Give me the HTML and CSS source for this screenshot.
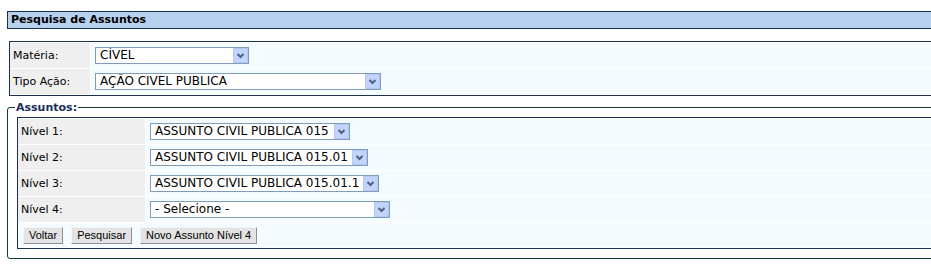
FILE: index.html
```html
<!DOCTYPE html>
<html lang="pt-BR">
<head>
    <meta charset="UTF-8">
    <title>Pesquisa de Assuntos</title>
    <link rel="stylesheet" href="styles.css">
</head>
<body>
    <div class="page">
        <div class="titulo">Pesquisa de Assuntos</div>

        <!-- Filtro principal -->
        <div class="tabela tabela-filtro">
            <div class="linha">
                <div class="rotulo">Matéria:</div>
                <div class="campo">
                    <span class="combo" style="width: 154px">
                        <select><option>CÍVEL</option></select>
                        <span class="seta"><svg width="13" height="13" viewBox="0 0 13 13"><polyline points="3.5,5 6.5,8 9.5,5" fill="none" stroke="#4d6185" stroke-width="2"/></svg></span>
                    </span>
                </div>
            </div>
            <div class="linha">
                <div class="rotulo">Tipo Ação:</div>
                <div class="campo">
                    <span class="combo" style="width: 286px">
                        <select><option>AÇÃO CIVEL PUBLICA</option></select>
                        <span class="seta"><svg width="13" height="13" viewBox="0 0 13 13"><polyline points="3.5,5 6.5,8 9.5,5" fill="none" stroke="#4d6185" stroke-width="2"/></svg></span>
                    </span>
                </div>
            </div>
        </div>

        <!-- Assuntos -->
        <fieldset class="assuntos">
            <legend>Assuntos:</legend>
            <div class="tabela tabela-niveis">
                <div class="linha">
                    <div class="rotulo">Nível 1:</div>
                    <div class="campo">
                        <span class="combo" style="width: 200px">
                            <select><option>ASSUNTO CIVIL PUBLICA 015</option></select>
                            <span class="seta"><svg width="13" height="13" viewBox="0 0 13 13"><polyline points="3.5,5 6.5,8 9.5,5" fill="none" stroke="#4d6185" stroke-width="2"/></svg></span>
                        </span>
                    </div>
                </div>
                <div class="linha">
                    <div class="rotulo">Nível 2:</div>
                    <div class="campo">
                        <span class="combo" style="width: 218px">
                            <select><option>ASSUNTO CIVIL PUBLICA 015.01</option></select>
                            <span class="seta"><svg width="13" height="13" viewBox="0 0 13 13"><polyline points="3.5,5 6.5,8 9.5,5" fill="none" stroke="#4d6185" stroke-width="2"/></svg></span>
                        </span>
                    </div>
                </div>
                <div class="linha">
                    <div class="rotulo">Nível 3:</div>
                    <div class="campo">
                        <span class="combo" style="width: 229px">
                            <select><option>ASSUNTO CIVIL PUBLICA 015.01.1</option></select>
                            <span class="seta"><svg width="13" height="13" viewBox="0 0 13 13"><polyline points="3.5,5 6.5,8 9.5,5" fill="none" stroke="#4d6185" stroke-width="2"/></svg></span>
                        </span>
                    </div>
                </div>
                <div class="linha">
                    <div class="rotulo">Nível 4:</div>
                    <div class="campo">
                        <span class="combo" style="width: 240px">
                            <select><option>- Selecione -</option></select>
                            <span class="seta"><svg width="13" height="13" viewBox="0 0 13 13"><polyline points="3.5,5 6.5,8 9.5,5" fill="none" stroke="#4d6185" stroke-width="2"/></svg></span>
                        </span>
                    </div>
                </div>
                <div class="linha-botoes">
                    <button class="botao">Voltar</button>
                    <button class="botao">Pesquisar</button>
                    <button class="botao">Novo Assunto Nível 4</button>
                </div>
            </div>
        </fieldset>
    </div>
</body>
</html>
```

FILE: styles.css
```css
/* Geral */
body {
    margin: 0;
    padding: 11px 0 0 7px;
    font-family: "DejaVu Sans", Verdana, sans-serif;
    font-size: 11px;
    color: #000;
    background: #fff;
    overflow: hidden;
}

.page {
    width: 1000px;
}

/* Barra de titulo */
.titulo {
    height: 16px;
    line-height: 16px;
    padding-left: 3px;
    border: 1px solid #1c3150;
    background: #b8d1ee;
    font-weight: bold;
}

/* Tabelas */
.tabela {
    display: flex;
    flex-direction: column;
    gap: 1px;
    padding: 1px 0;
    border: 1px solid #1c3150;
    background: #fff;
}

.linha {
    display: flex;
    gap: 1px;
    height: 25px;
}

.rotulo {
    display: flex;
    align-items: center;
    padding-left: 3px;
    background: #efefef;
}

.campo {
    flex: 1;
    display: flex;
    align-items: center;
    padding-left: 4px;
    background: #f5fcff;
}

.tabela-filtro {
    margin: 12px 0 0 2px;
}

.tabela-filtro .rotulo {
    width: 77px;
}

.tabela-niveis .rotulo {
    width: 124px;
}

/* Combos */
.combo {
    position: relative;
    display: inline-flex;
    height: 17px;
}

.combo select {
    appearance: none;
    -webkit-appearance: none;
    width: 100%;
    height: 17px;
    margin: 0;
    padding: 0 18px 0 4px;
    box-sizing: border-box;
    border: 1px solid #7f9db9;
    border-radius: 0;
    background: #fff;
    font-family: "DejaVu Sans", Verdana, sans-serif;
    font-size: 12px;
    line-height: 15px;
    color: #000;
}

/* botao da seta sobre o combo */
.combo .seta {
    position: absolute;
    top: 1px;
    right: 1px;
    width: 13px;
    height: 13px;
    border: 1px solid #b4c8f5;
    background: #c3d4fc;
    display: flex;
    pointer-events: none;
}

/* Fieldset */
.assuntos {
    margin: 5px 0 0 0;
    padding: 3px 0 9px 9px;
    border: 1px solid #0d3d33;
    border-radius: 3px;
}

.assuntos legend {
    margin-left: -2px;
    padding: 0 1px;
    font-weight: bold;
    line-height: 13px;
    color: #1a2e5c;
}

.linha-botoes {
    display: flex;
    align-items: center;
    gap: 8px;
    height: 24px;
    padding-left: 5px;
    background: #f5fcff;
}

.botao {
    height: 17px;
    margin: 0;
    padding: 0 5px;
    border: 1px solid;
    border-color: #f4f4f4 #8f8f8f #8f8f8f #f4f4f4;
    background: #e3e3e3;
    font-family: "Liberation Sans", Arial, sans-serif;
    font-size: 11px;
    line-height: 15px;
    color: #000;
    cursor: pointer;
}
```
